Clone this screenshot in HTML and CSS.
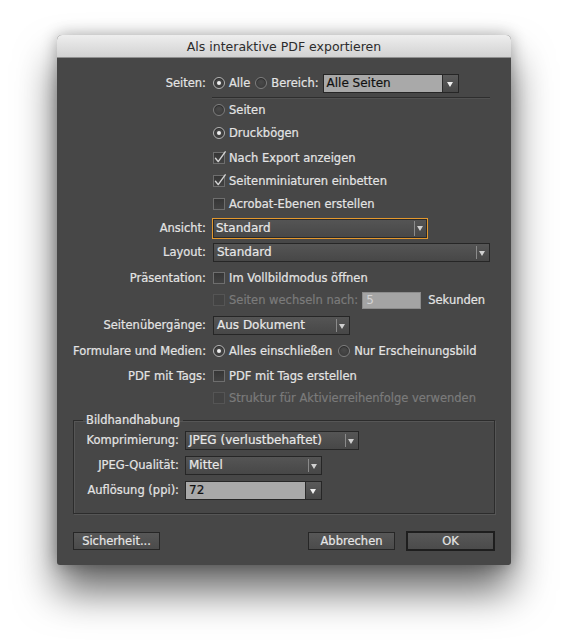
FILE: index.html
```html
<!DOCTYPE html>
<html lang="de">
<head>
  <meta charset="UTF-8">
  <title>Als interaktive PDF exportieren</title>
  <link rel="stylesheet" href="styles.css">
</head>
<body>
  <div class="dialog">
    <div class="titlebar">Als interaktive PDF exportieren</div>

    <div class="content">
      <div class="row r-pages">
        <span class="lbl">Seiten:</span>
        <div class="ctl">
          <span class="radio on"></span><span class="opt">Alle</span>
          <span class="radio"></span><span class="opt">Bereich:</span>
          <div class="select light w-range"><span class="val">Alle Seiten</span><span class="arrow"></span></div>
        </div>
      </div>
      <div class="sep"></div>

      <div class="row r-seiten"><span class="lbl"></span><div class="ctl"><span class="radio"></span><span class="opt">Seiten</span></div></div>
      <div class="row r-bogen"><span class="lbl"></span><div class="ctl"><span class="radio on"></span><span class="opt">Druckbögen</span></div></div>
      <div class="row r-export">
        <span class="lbl"></span>
        <div class="ctl">
          <span class="check on"><svg viewBox="0 0 14 14"><path d="M2.5 7.2 L5.2 10.6 L12.2 0.8"/></svg></span><span class="opt">Nach Export anzeigen</span>
        </div>
      </div>
      <div class="row r-mini">
        <span class="lbl"></span>
        <div class="ctl">
          <span class="check on"><svg viewBox="0 0 14 14"><path d="M2.5 7.2 L5.2 10.6 L12.2 0.8"/></svg></span><span class="opt">Seitenminiaturen einbetten</span>
        </div>
      </div>
      <div class="row r-ebenen"><span class="lbl"></span><div class="ctl"><span class="check"></span><span class="opt">Acrobat-Ebenen erstellen</span></div></div>

      <div class="row r-ansicht">
        <span class="lbl">Ansicht:</span>
        <div class="ctl"><div class="select focus w-ansicht"><span class="val">Standard</span><span class="arrow"></span></div></div>
      </div>
      <div class="row r-layout">
        <span class="lbl">Layout:</span>
        <div class="ctl"><div class="select w-layout"><span class="val">Standard</span><span class="arrow"></span></div></div>
      </div>
      <div class="row r-praes">
        <span class="lbl">Präsentation:</span>
        <div class="ctl"><span class="check"></span><span class="opt">Im Vollbildmodus öffnen</span></div>
      </div>
      <div class="row r-wechsel">
        <span class="lbl"></span>
        <div class="ctl">
          <span class="check off"></span><span class="opt dim">Seiten wechseln nach:</span>
          <span class="field">5</span><span class="opt unit">Sekunden</span>
        </div>
      </div>
      <div class="row r-ueber">
        <span class="lbl">Seitenübergänge:</span>
        <div class="ctl"><div class="select w-ueber"><span class="val">Aus Dokument</span><span class="arrow"></span></div></div>
      </div>
      <div class="row r-medien">
        <span class="lbl">Formulare und Medien:</span>
        <div class="ctl">
          <span class="radio on"></span><span class="opt">Alles einschließen</span>
          <span class="radio"></span><span class="opt">Nur Erscheinungsbild</span>
        </div>
      </div>
      <div class="row r-tags">
        <span class="lbl">PDF mit Tags:</span>
        <div class="ctl"><span class="check"></span><span class="opt">PDF mit Tags erstellen</span></div>
      </div>
      <div class="row r-struktur">
        <span class="lbl"></span>
        <div class="ctl"><span class="check off"></span><span class="opt dim">Struktur für Aktivierreihenfolge verwenden</span></div>
      </div>

      <fieldset class="group">
        <legend>Bildhandhabung</legend>
        <div class="row">
          <span class="lbl">Komprimierung:</span>
          <div class="ctl"><div class="select w-komp"><span class="val">JPEG (verlustbehaftet)</span><span class="arrow"></span></div></div>
        </div>
        <div class="row">
          <span class="lbl">JPEG-Qualität:</span>
          <div class="ctl"><div class="select w-small"><span class="val">Mittel</span><span class="arrow"></span></div></div>
        </div>
        <div class="row">
          <span class="lbl">Auflösung (ppi):</span>
          <div class="ctl"><div class="select light w-small"><span class="val">72</span><span class="arrow"></span></div></div>
        </div>
      </fieldset>

      <div class="buttons">
        <button class="btn">Sicherheit...</button>
        <div class="right">
          <button class="btn">Abbrechen</button>
          <button class="btn default">OK</button>
        </div>
      </div>
    </div>
  </div>
</body>
</html>
```

FILE: styles.css
```css
* { margin: 0; padding: 0; box-sizing: border-box; }

html, body { height: 100%; }

body {
  background: #fff;
  font-family: "DejaVu Sans", "Liberation Sans", sans-serif;
  font-size: 11.5px;
  color: #e4e4e4;
  padding: 35px 0 0 57px;
}

.dialog {
  width: 454px;
  height: 530px;
  background: #474747;
  border-radius: 5px 5px 3px 3px;
  box-shadow: 0 26px 40px rgba(0, 0, 0, 0.6), 0 0 16px rgba(0, 0, 0, 0.3);
}

.titlebar {
  height: 23px;
  line-height: 23px;
  text-align: center;
  font-size: 12.5px;
  color: #2c2c2c;
  background: linear-gradient(#eeeeee, #d2d2d2);
  border-bottom: 1px solid #8f8f8f;
  border-radius: 5px 5px 0 0;
}

.content {
  padding-top: 15px;
  -webkit-text-stroke: 0.2px;
}

/* generic form rows: label column + control column */
.row {
  display: flex;
  align-items: center;
  height: 20px;
}
.lbl {
  width: 149px;
  flex: none;
  text-align: right;
  white-space: nowrap;
}
.ctl {
  display: flex;
  align-items: center;
  margin-left: 6px;
  white-space: nowrap;
}
.opt { margin-left: 4px; margin-right: 6px; }
.opt.dim { color: #7b7b7b; }
.opt.unit { margin-left: 7px; }
.r-pages .opt { margin-right: 5px; }
.r-pages .select { margin-left: -1px; }
.r-wechsel .opt.dim { margin-right: 4px; }

.sep {
  margin: 4px 21px 0 155px;
  border-top: 1px solid #2e2e2e;
  border-bottom: 1px solid #525252;
}

.r-seiten   { margin-top: 1px; }
.r-bogen    { margin-top: 3px; }
.r-export   { margin-top: 5px; }
.r-mini     { margin-top: 3px; }
.r-ebenen   { margin-top: 3px; }
.r-ansicht  { margin-top: 4px; }
.r-layout   { margin-top: 4px; }
.r-praes    { margin-top: 6px; }
.r-wechsel  { margin-top: 2px; }
.r-ueber    { margin-top: 5px; }
.r-medien   { margin-top: 6px; }
.r-tags     { margin-top: 5px; }
.r-struktur { margin-top: 2px; }

/* radio buttons */
.radio {
  width: 12px;
  height: 12px;
  margin-left: 1px;
  flex: none;
  border-radius: 50%;
  background: radial-gradient(circle at 50% 40%, #4a4a4a, #383838);
  border: 1px solid #7e7e7e;
  box-shadow: inset 0 1px 1px rgba(0, 0, 0, 0.4);
  position: relative;
}
.radio.on { border-color: #b4b4b4; }
.radio.on::after {
  content: "";
  position: absolute;
  left: 3px;
  top: 3px;
  width: 4px;
  height: 4px;
  border-radius: 50%;
  background: #f0f0f0;
}
.r-pages .radio + .opt + .radio,
.r-medien .radio + .opt + .radio { margin-left: 0; }

/* checkboxes */
.check {
  width: 12px;
  height: 12px;
  margin-left: 1px;
  flex: none;
  background: linear-gradient(#363636, #424242);
  border: 1px solid #6e6e6e;
  position: relative;
}
.check.off { border-color: #555; background: #434343; }
.check svg {
  position: absolute;
  left: -1px;
  top: -2px;
  width: 14px;
  height: 14px;
  overflow: visible;
}
.check path {
  fill: none;
  stroke: #d4d4d4;
  stroke-width: 1.4;
  stroke-linecap: round;
  stroke-linejoin: round;
}

/* dropdown menus */
.select {
  display: flex;
  align-items: center;
  height: 19px;
  background: linear-gradient(#555555, #474747);
  border: 1px solid #262626;
  color: #e8e8e8;
}
.select .val { flex: 1; padding-left: 3px; font-size: 12px; }
.select .arrow {
  width: 13px;
  height: 100%;
  flex: none;
  position: relative;
}
.select .arrow::before {
  content: "";
  position: absolute;
  left: 0;
  top: 2px;
  bottom: 2px;
  border-left: 1px solid #8a8a8a;
}
.select .arrow::after {
  content: "";
  position: absolute;
  left: 3px;
  top: 7px;
  border-left: 3.5px solid transparent;
  border-right: 3.5px solid transparent;
  border-top: 5px solid #d0d0d0;
}
.select.light { background: #a9a9a9; color: #111; }
.select.light .arrow {
  width: 16px;
  background: linear-gradient(#5a5a5a, #484848);
  border-left: 1px solid #2a2a2a;
}
.select.light .arrow::before { display: none; }
.select.light .arrow::after { left: 4px; border-top-color: #f0f0f0; }
.select.focus {
  height: 21px;
  border: 1px solid #e3982e;
  box-shadow: inset 0 0 0 1px #2a2a2a;
}

.w-range   { width: 136px; }
.w-ansicht { width: 216px; }
.w-layout  { width: 277px; margin-left: 1px; }
.w-ueber   { width: 137px; margin-left: 1px; }
.w-komp    { width: 174px; }
.w-small   { width: 137px; }

/* disabled number field */
.field {
  width: 59px;
  height: 17px;
  line-height: 15px;
  padding-left: 3px;
  background: #a4a4a4;
  border: 1px solid #8c8c8c;
  color: #d4d4d4;
  font-size: 12px;
  -webkit-text-stroke: 0;
}

/* image handling group */
.group {
  margin: 5px 16px 0;
  padding: 3px 0 13px;
  border: 1px solid #2c2c2c;
  box-shadow: 1px 1px 0 #565656, inset 1px 1px 0 #565656;
  min-width: 0;
}
.group legend {
  margin-left: 9px;
  padding: 0 3px;
  line-height: 14px;
}
.group .row + .row { margin-top: 5px; }
.group .lbl { width: 105px; }
.group .ctl { margin-left: 6px; }

/* dialog buttons */
.buttons {
  display: flex;
  justify-content: space-between;
  margin: 18px 16px 0;
}
.buttons .right { display: flex; gap: 11px; }
.btn {
  width: 88px;
  height: 18px;
  font: inherit;
  color: #e6e6e6;
  background: linear-gradient(#575757, #4b4b4b);
  border: 1px solid #262626;
}
.btn:first-child { width: 87px; }
.btn.default {
  width: 89px;
  height: 20px;
  margin-top: -1px;
  border: 2px solid #1e1e1e;
}
```
